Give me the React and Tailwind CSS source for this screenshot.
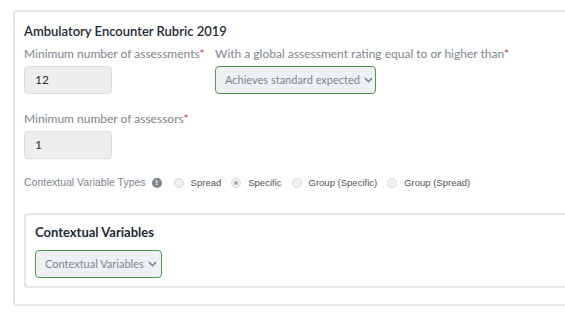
import { useState } from 'react'

const radioOptions = ['Spread', 'Specific', 'Group (Specific)', 'Group (Spread)']

function Chevron() {
  return (
    <svg width="9" height="6" viewBox="0 0 9 6" className="ml-[4px] shrink-0">
      <path d="M1 1.2 L4.5 4.6 L8 1.2" fill="none" stroke="#7d8790" strokeWidth="1.7" />
    </svg>
  )
}

function SelectButton({ label, className = '' }) {
  return (
    <div
      className={`flex items-center h-[28px] pl-[9px] pr-[4px] border border-[#4d9a4f] rounded-[4px] bg-[#eef1f3] text-[11px] text-[#7b858e] ${className}`}
    >
      <span className="whitespace-nowrap">{label}</span>
      <Chevron />
    </div>
  )
}

function Label({ children }) {
  return (
    <div className="text-[12px] leading-[16px] text-[#7c858f] whitespace-nowrap">
      {children}
      <span className="text-[#d33a52]">*</span>
    </div>
  )
}

function NumberBox({ value }) {
  return (
    <div className="mt-[4px] h-[28px] w-[88px] flex items-center pl-[10px] bg-[#eeeeee] border border-[#dddddd] rounded-[4px] text-[12px] text-[#2a2f35]">
      {value}
    </div>
  )
}

export default function App() {
  const [selected] = useState('Specific')

  return (
    <div className="w-[565px] h-[316px] overflow-hidden bg-white font-['Lato',sans-serif]">
      <div className="ml-[13px] mt-[10px] w-[600px] border-2 border-[#e3e5e8] rounded-[4px] pl-[9px] pt-[9px] pb-[16px]">
        <h2 className="text-[13px] leading-[20px] font-semibold text-[#1d2a36]">
          Ambulatory Encounter Rubric 2019
        </h2>

        {/* Assessments + rating */}
        <div className="flex mt-[5px]">
          <div className="w-[191px] shrink-0">
            <Label>Minimum number of assessments</Label>
            <NumberBox value="12" />
          </div>
          <div>
            <Label>With a global assessment rating equal to or higher than</Label>
            <SelectButton label="Achieves standard expected" className="mt-[4px] w-[161px]" />
          </div>
        </div>

        {/* Assessors */}
        <div className="mt-[17px]">
          <Label>Minimum number of assessors</Label>
          <NumberBox value="1" />
        </div>

        {/* Contextual variable types */}
        <div className="flex items-center mt-[16px] h-[16px] font-['Liberation_Sans',sans-serif]">
          <span className="text-[10.5px] text-[#7c858f]">Contextual Variable Types</span>
          <span className="ml-[6px] w-[10px] h-[10px] rounded-full bg-[#7d858d] text-white text-[8px] leading-[10px] font-bold flex items-center justify-center">
            !
          </span>
          <div className="flex items-center ml-[12px] gap-[10px] text-[9.5px] text-[#4f5459]">
            {radioOptions.map((opt) => (
              <label key={opt} className="flex items-center gap-[7px]">
                <span className="w-[10px] h-[10px] rounded-full border border-[#d6d6d6] bg-[#f1f1f1] flex items-center justify-center">
                  {selected === opt && <span className="w-[4px] h-[4px] rounded-full bg-[#a8a8a8]" />}
                </span>
                <span>{opt}</span>
              </label>
            ))}
          </div>
        </div>

        {/* Contextual variables card */}
        <div className="mt-[22px] border-2 border-[#e3e5e8] rounded-[4px] pl-[9px] pt-[7px] pb-[8px]">
          <h3 className="text-[13px] leading-[20px] font-bold text-[#1d2a36]">Contextual Variables</h3>
          <SelectButton label="Contextual Variables" className="mt-[8px] w-[127px]" />
        </div>
      </div>
    </div>
  )
}
